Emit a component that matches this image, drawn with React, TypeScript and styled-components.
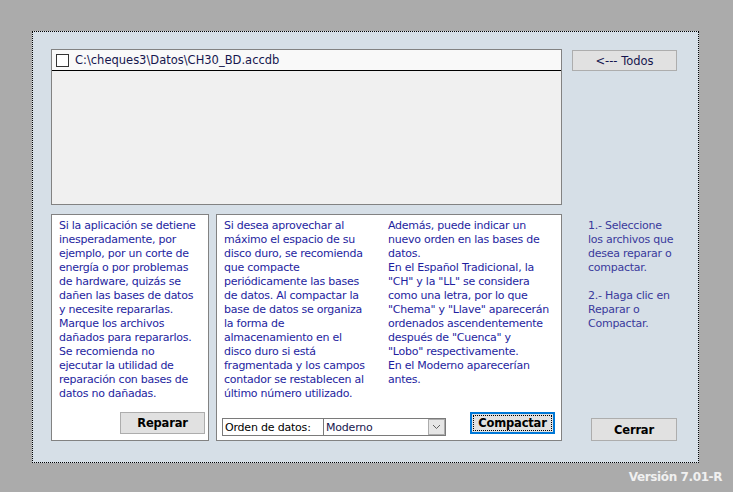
import styled, { createGlobalStyle } from 'styled-components';

const GlobalStyle = createGlobalStyle`
    html, body {
        margin: 0;
        padding: 0;
        background: #ababab;
        font-family: "DejaVu Sans", Verdana, sans-serif;
    }
`;

const Screen = styled.div`
    width: 733px;
    height: 492px;
    padding: 31px 0 0 32px;
    box-sizing: border-box;
    display: flex;
    flex-direction: column;
`;

const Panel = styled.div`
    width: 667px;
    height: 432px;
    box-sizing: border-box;
    border: 1px dotted #000;
    background: #d6dfe7;
    padding: 17px 0 21px 18px;
    display: flex;
`;

const Main = styled.div`
    width: 511px;
    display: flex;
    flex-direction: column;
    gap: 9px;
`;

const ListBox = styled.div`
    height: 156px;
    box-sizing: border-box;
    border: 1px solid #828282;
    background: #f0f0f0;
`;

const ListRow = styled.div`
    height: 21px;
    box-sizing: border-box;
    border-bottom: 1px solid #000;
    background: #f9f9f9;
    display: flex;
    align-items: center;
    gap: 6px;
    padding-left: 4px;
    font-size: 11.5px;
    color: #16164e;
`;

const CheckBox = styled.span`
    width: 13px;
    height: 13px;
    box-sizing: border-box;
    border: 1px solid #333;
    background: #fff;
    margin-top: 1px;
`;

const BottomRow = styled.div`
    height: 227px;
    display: flex;
    gap: 7px;
`;

const Box = styled.div<{ $width?: number }>`
    box-sizing: border-box;
    border: 1px solid #828282;
    background: #fff;
    display: flex;
    flex-direction: column;
    ${p => (p.$width ? `width: ${p.$width}px;` : 'flex: 1;')}
`;

const Text = styled.div<{ $color?: string }>`
    font-size: 11px;
    letter-spacing: -0.25px;
    line-height: 14px;
    color: ${p => p.$color || '#1e1ea0'};
    white-space: nowrap;
`;

const LeftText = styled(Text)`
    padding: 4px 0 0 7px;
    flex: 1;
`;

const Columns = styled.div`
    flex: 1;
    display: grid;
    grid-template-columns: 164px 1fr;
    padding: 4px 0 0 7px;
`;

const BoxFooter = styled.div`
    display: flex;
    align-items: flex-end;
    justify-content: space-between;
    padding: 0 6px 4px 5px;
`;

const Button = styled.button<{ $w: number; $h: number; $bold?: boolean }>`
    width: ${p => p.$w}px;
    height: ${p => p.$h}px;
    box-sizing: border-box;
    background: #e1e1e1;
    border: 1px solid #adadad;
    font-family: "DejaVu Sans", Verdana, sans-serif;
    font-size: ${p => (p.$bold ? '11.5px' : '11.5px')};
    letter-spacing: ${p => (p.$bold ? '-0.2px' : '0')};
    font-weight: ${p => (p.$bold ? 700 : 400)};
    color: ${p => (p.$bold ? '#000' : '#16164e')};
    padding: 0;
    display: flex;
    align-items: center;
    justify-content: center;
    position: relative;
`;

const RepararButton = styled(Button)`
    align-self: flex-end;
    margin: 0 3px 6px 0;
`;

const FocusButton = styled(Button)`
    border: 2px solid #0078d7;
    margin-bottom: 2px;
    &::after {
        content: '';
        position: absolute;
        inset: 1px;
        border: 1px dotted #000;
    }
`;

const Combo = styled.div`
    width: 224px;
    height: 18px;
    box-sizing: border-box;
    border: 1px solid #7a7a7a;
    display: flex;
    font-size: 11px;
    letter-spacing: -0.2px;
    background: #fff;
`;

const ComboLabel = styled.span`
    width: 98px;
    border-right: 1px solid #7a7a7a;
    padding-left: 2px;
    display: flex;
    align-items: center;
    color: #000;
`;

const ComboValue = styled.span`
    flex: 1;
    padding-left: 2px;
    display: flex;
    align-items: center;
    color: #16164e;
`;

const ComboArrow = styled.span`
    width: 17px;
    box-sizing: border-box;
    background: #e6e6e6;
    border: 1px solid #acacac;
    display: flex;
    align-items: center;
    justify-content: center;
`;

const Side = styled.div`
    flex: 1;
    display: flex;
    flex-direction: column;
    padding-left: 10px;
`;

const TodosButton = styled(Button)`
    margin-top: 1px;
`;

const SideText = styled(Text)`
    margin: 148px 0 0 16px;
`;

const CerrarButton = styled(Button)`
    margin: auto 0 0 19px;
`;

const Version = styled.div`
    width: 690px;
    margin-top: 7px;
    text-align: right;
    font-size: 12px;
    letter-spacing: -0.4px;
    font-weight: 700;
    color: #f0f0f0;
`;

const leftLines = [
    'Si la aplicación se detiene',
    'inesperadamente, por',
    'ejemplo, por un corte de',
    'energía o por problemas',
    'de hardware, quizás se',
    'dañen las bases de datos',
    'y necesite repararlas.',
    'Marque los archivos',
    'dañados para repararlos.',
    'Se recomienda no',
    'ejecutar la utilidad de',
    'reparación con bases de',
    'datos no dañadas.',
];

const compactLines = [
    'Si desea aprovechar al',
    'máximo el espacio de su',
    'disco duro, se recomienda',
    'que compacte',
    'periódicamente las bases',
    'de datos. Al compactar la',
    'base de datos se organiza',
    'la forma de',
    'almacenamiento en el',
    'disco duro si está',
    'fragmentada y los campos',
    'contador se restablecen al',
    'último número utilizado.',
];

const orderLines = [
    'Además, puede indicar un',
    'nuevo orden en las bases de',
    'datos.',
    'En el Español Tradicional, la',
    '"CH" y la "LL" se considera',
    'como una letra, por lo que',
    '"Chema" y "Llave" aparecerán',
    'ordenados ascendentemente',
    'después de "Cuenca" y',
    '"Lobo" respectivamente.',
    'En el Moderno aparecerían',
    'antes.',
];

const stepLines = [
    '1.- Seleccione',
    'los archivos que',
    'desea reparar o',
    'compactar.',
    '\u00a0',
    '2.- Haga clic en',
    'Reparar o',
    'Compactar.',
];

const lines = (items: string[]) => items.map((l, i) => <div key={i}>{l}</div>);

export default function App() {
    return (
        <>
            <GlobalStyle />
            <Screen>
                <Panel>
                    <Main>
                        <ListBox>
                            <ListRow>
                                <CheckBox />
                                <span>C:\cheques3\Datos\CH30_BD.accdb</span>
                            </ListRow>
                        </ListBox>
                        <BottomRow>
                            <Box $width={158}>
                                <LeftText>{lines(leftLines)}</LeftText>
                                <RepararButton $w={85} $h={22} $bold>Reparar</RepararButton>
                            </Box>
                            <Box>
                                <Columns>
                                    <Text>{lines(compactLines)}</Text>
                                    <Text>{lines(orderLines)}</Text>
                                </Columns>
                                <BoxFooter>
                                    <Combo>
                                        <ComboLabel>Orden de datos:</ComboLabel>
                                        <ComboValue>Moderno</ComboValue>
                                        <ComboArrow>
                                            <svg width="9" height="6" viewBox="0 0 9 6">
                                                <path d="M1 1 L4.5 4.5 L8 1" fill="none" stroke="#606060" strokeWidth="1" />
                                            </svg>
                                        </ComboArrow>
                                    </Combo>
                                    <FocusButton $w={85} $h={22} $bold>Compactar</FocusButton>
                                </BoxFooter>
                            </Box>
                        </BottomRow>
                    </Main>
                    <Side>
                        <TodosButton $w={105} $h={21}>&lt;--- Todos</TodosButton>
                        <SideText $color="#3a3a9c">{lines(stepLines)}</SideText>
                        <CerrarButton $w={86} $h={23} $bold>Cerrar</CerrarButton>
                    </Side>
                </Panel>
                <Version>Versión 7.01-R</Version>
            </Screen>
        </>
    );
}
